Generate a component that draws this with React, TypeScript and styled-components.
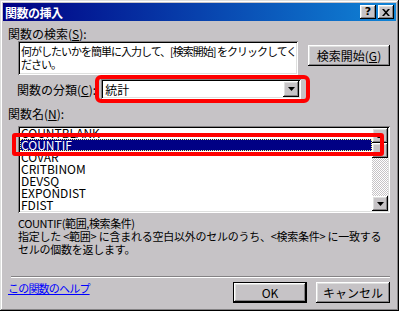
import React from "react";
import styled, { createGlobalStyle } from "styled-components";

const FACE = "#c6c3c6";
const FONT = `"Noto Sans CJK JP", "Noto Sans", sans-serif`;

const GlobalStyle = createGlobalStyle`
  html, body {
    margin: 0;
    padding: 0;
    background: ${FACE};
  }
`;

const raised = `
  box-shadow: inset -1px -1px #000, inset 1px 1px #fff,
    inset -2px -2px #848284, inset 2px 2px #dedfde;
`;

const sunken = `
  box-shadow: inset 1px 1px #848284, inset -1px -1px #fff,
    inset 2px 2px #000, inset -2px -2px #dedfde;
`;

const Window = styled.div`
  box-sizing: border-box;
  width: 399px;
  height: 311px;
  padding: 3px;
  background: ${FACE};
  box-shadow: inset -1px -1px #000, inset 1px 1px #dedfde,
    inset -2px -2px #848284, inset 2px 2px #fff;
  display: flex;
  flex-direction: column;
  font-family: ${FONT};
  font-size: 12px;
  line-height: 13px;
  color: #000;
`;

const TitleBar = styled.div`
  height: 18px;
  flex: none;
  display: flex;
  align-items: center;
  justify-content: space-between;
  padding: 0 2px;
  background: linear-gradient(to right, #000084, #1084d6);
`;

const TitleText = styled.span`
  color: #fff;
  font-weight: 700;
  letter-spacing: -0.5px;
`;

const CapButtons = styled.div`
  display: flex;
  gap: 2px;
`;

const CapButton = styled.div`
  width: 16px;
  height: 14px;
  background: ${FACE};
  ${raised}
  display: grid;
  place-items: center;
  font-family: "DejaVu Sans", sans-serif;
  font-weight: 700;
  font-size: 11px;
  line-height: 14px;
`;

const Body = styled.div`
  flex: 1;
  display: flex;
  flex-direction: column;
  padding: 0 6px 0 5px;
`;

const Label = styled.div<{ $top: number }>`
  margin-top: ${(p) => p.$top}px;
  white-space: nowrap;
`;

const SearchRow = styled.div`
  display: flex;
  align-items: flex-start;
  gap: 10px;
  margin-top: 1px;
  padding-left: 10px;
`;

const TextArea = styled.div`
  box-sizing: border-box;
  width: 280px;
  height: 34px;
  padding: 4px 2px 4px 3px;
  background: #fff;
  ${sunken}
  font-size: 11px;
  letter-spacing: -1px;
  white-space: nowrap;
  overflow: hidden;
`;

const PushButton = styled.div<{ $w: number; $default?: boolean }>`
  box-sizing: border-box;
  width: ${(p) => p.$w}px;
  height: 21px;
  display: flex;
  align-items: center;
  justify-content: center;
  background: ${FACE};
  ${raised}
  ${(p) => (p.$default ? `border: 1px solid #000;` : ``)}
  white-space: nowrap;
`;

const SearchButton = styled(PushButton)`
  margin-top: 4px;
`;

const ComboRow = styled.div`
  display: flex;
  align-items: center;
  margin-top: 4px;
  padding-left: 9px;
  gap: 5px;
`;

const Highlight = styled.div`
  position: relative;
  &::after {
    content: "";
    position: absolute;
    inset: -4px -9px -4px -6px;
    border: 4px solid #ff0000;
    border-radius: 6px;
    pointer-events: none;
  }
`;

const Combo = styled.div`
  box-sizing: border-box;
  width: 200px;
  height: 20px;
  padding: 2px;
  background: #fff;
  ${sunken}
  display: flex;
  align-items: center;
`;

const ComboText = styled.span`
  flex: 1;
  padding-left: 2px;
`;

const ArrowButton = styled.div`
  width: 16px;
  height: 16px;
  background: ${FACE};
  ${raised}
  display: grid;
  place-items: center;
`;

const ListBox = styled.div`
  position: relative;
  box-sizing: border-box;
  margin-top: 6px;
  margin-left: 10px;
  height: 87px;
  padding: 2px;
  background: #fff;
  ${sunken}
  display: flex;
`;

const ListItems = styled.div`
  flex: 1;
  overflow: hidden;
`;

const ListScroll = styled.div`
  margin-top: -1px;
`;

const Item = styled.div<{ $selected?: boolean }>`
  height: 12px;
  line-height: 12px;
  padding-left: 1px;
  white-space: nowrap;
  color: ${(p) => (p.$selected ? "#fff" : "#000")};
  background: ${(p) => (p.$selected ? "#000084" : "transparent")};
  outline: ${(p) => (p.$selected ? "1px dotted #ffff80" : "none")};
  outline-offset: -1px;
`;

const ScrollBar = styled.div`
  width: 16px;
  display: flex;
  flex-direction: column;
  background: repeating-conic-gradient(#fff 0 25%, ${FACE} 0 50%) 0 0 / 2px 2px;
`;

const ScrollButton = styled.div`
  width: 16px;
  height: 15px;
  flex: none;
  background: ${FACE};
  ${raised}
  display: grid;
  place-items: center;
`;

const Track = styled.div`
  flex: 1;
`;

const RowMark = styled.div`
  position: absolute;
  left: -6px;
  right: 6px;
  top: 7px;
  height: 23px;
  box-sizing: border-box;
  border: 4px solid #ff0000;
  border-radius: 3px;
  pointer-events: none;
`;

const Syntax = styled.div`
  margin-top: 4px;
  padding-left: 10px;
  font-size: 11px;
  letter-spacing: -0.4px;
  white-space: nowrap;
`;

const Description = styled.div`
  padding-left: 10px;
  font-size: 11px;
  letter-spacing: -0.25px;
  white-space: nowrap;
`;

const Spacer = styled.div`
  flex: 1;
`;

const Separator = styled.div`
  margin-left: 3px;
  height: 0;
  border-top: 1px solid #848284;
  border-bottom: 1px solid #fff;
`;

const Footer = styled.div`
  display: flex;
  align-items: flex-start;
  margin-top: 4px;
  height: 26px;
  flex: none;
`;

const HelpLink = styled.a`
  color: #0000ff;
  text-decoration: underline;
  font-size: 11px;
  letter-spacing: -0.8px;
  line-height: 13px;
  white-space: nowrap;
`;

const FooterButtons = styled.div`
  margin-left: auto;
  display: flex;
  gap: 9px;
`;

const DownArrow = () => (
  <svg width="7" height="4" viewBox="0 0 7 4">
    <path d="M0 0h7L3.5 4z" fill="#000" />
  </svg>
);

const UpArrow = () => (
  <svg width="7" height="4" viewBox="0 0 7 4">
    <path d="M0 4h7L3.5 0z" fill="#000" />
  </svg>
);

const CloseGlyph = () => (
  <svg width="8" height="7" viewBox="0 0 8 7">
    <path d="M0 0h2l2 2.2L6 0h2L5 3.5 8 7H6L4 4.8 2 7H0l3-3.5z" fill="#000" />
  </svg>
);

const functions = ["COUNTBLANK", "COUNTIF", "COVAR", "CRITBINOM", "DEVSQ", "EXPONDIST", "FDIST"];

export default function App() {
  return (
    <>
      <GlobalStyle />
      <Window>
        <TitleBar>
          <TitleText>関数の挿入</TitleText>
          <CapButtons>
            <CapButton>?</CapButton>
            <CapButton>
              <CloseGlyph />
            </CapButton>
          </CapButtons>
        </TitleBar>
        <Body>
          <Label $top={6}>
            関数の検索(<u>S</u>):
          </Label>
          <SearchRow>
            <TextArea>
              何がしたいかを簡単に入力して、[検索開始] をクリックしてく
              <br />
              ださい。
            </TextArea>
            <SearchButton $w={82}>
              検索開始(<u>G</u>)
            </SearchButton>
          </SearchRow>
          <ComboRow>
            <span>
              関数の分類(<u>C</u>):
            </span>
            <Highlight>
              <Combo>
                <ComboText>統計</ComboText>
                <ArrowButton>
                  <DownArrow />
                </ArrowButton>
              </Combo>
            </Highlight>
          </ComboRow>
          <Label $top={8}>
            関数名(<u>N</u>):
          </Label>
          <ListBox>
            <ListItems>
              <ListScroll>
                {functions.map((name) => (
                  <Item key={name} $selected={name === "COUNTIF"}>
                    {name}
                  </Item>
                ))}
              </ListScroll>
            </ListItems>
            <ScrollBar>
              <ScrollButton>
                <UpArrow />
              </ScrollButton>
              <ScrollButton />
              <Track />
              <ScrollButton>
                <DownArrow />
              </ScrollButton>
            </ScrollBar>
            <RowMark />
          </ListBox>
          <Syntax>COUNTIF(範囲,検索条件)</Syntax>
          <Description>
            指定した &lt;範囲&gt; に含まれる空白以外のセルのうち、&lt;検索条件&gt; に一致する
            <br />
            セルの個数を返します。
          </Description>
          <Spacer />
          <Separator />
          <Footer>
            <HelpLink>この関数のヘルプ</HelpLink>
            <FooterButtons>
              <PushButton $w={74} $default>
                OK
              </PushButton>
              <PushButton $w={74}>キャンセル</PushButton>
            </FooterButtons>
          </Footer>
        </Body>
      </Window>
    </>
  );
}
